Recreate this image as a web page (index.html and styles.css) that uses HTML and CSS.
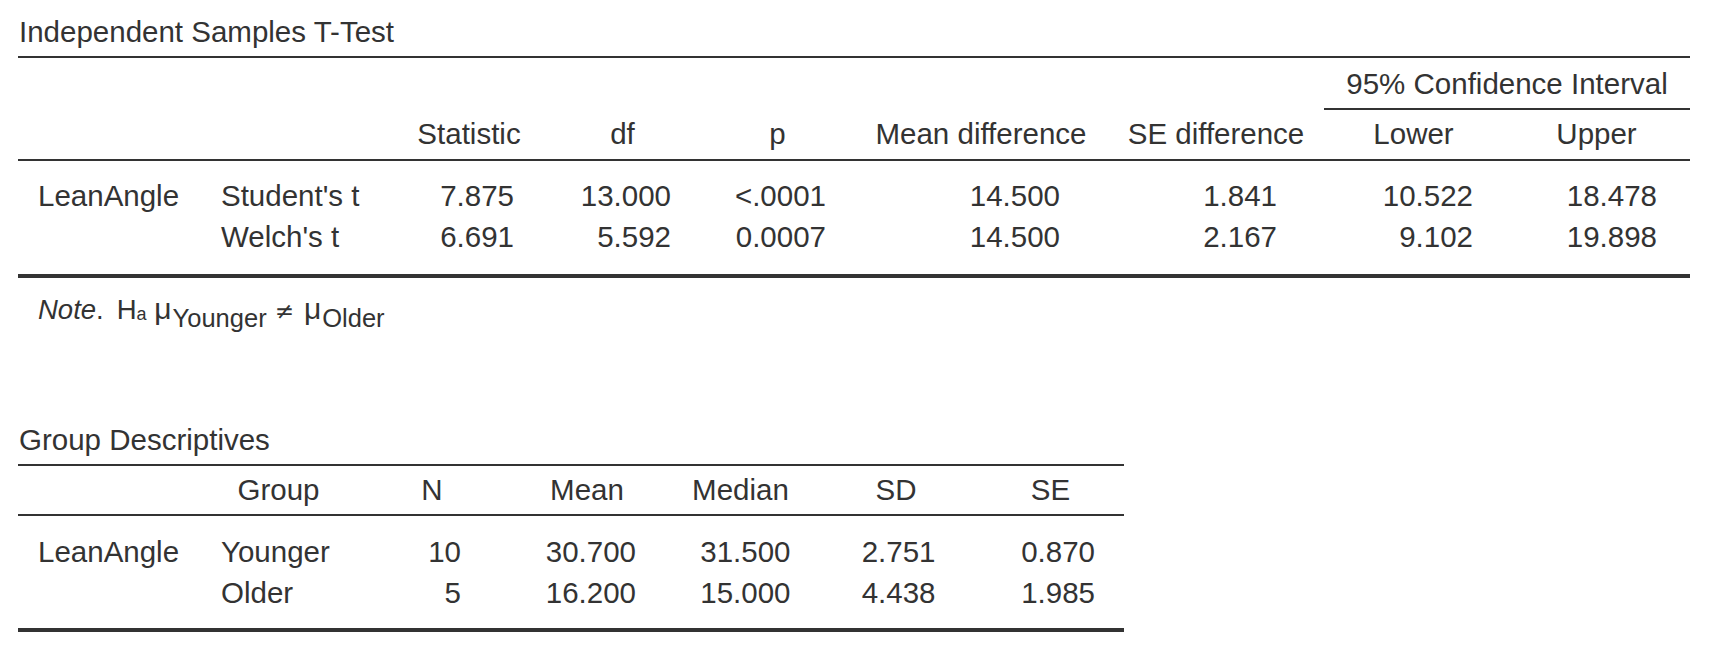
FILE: index.html
```html
<!DOCTYPE html>
<html lang="en">
<head>
<meta charset="utf-8">
<title>Independent Samples T-Test</title>
<link rel="stylesheet" href="styles.css">
</head>
<body>
<div class="report">
  <section class="analysis">
    <h2 class="title">Independent Samples T-Test</h2>
    <table class="stats ttest">
      <colgroup>
        <col class="c-var"><col class="c-test"><col class="c-stat"><col class="c-df"><col class="c-p">
        <col class="c-md"><col class="c-se"><col class="c-lo"><col class="c-up">
      </colgroup>
      <thead>
        <tr class="over">
          <th></th><th></th><th></th><th></th><th></th><th></th><th></th>
          <th class="span" colspan="2">95% Confidence Interval</th>
        </tr>
        <tr class="cols">
          <th></th><th></th>
          <th>Statistic</th><th>df</th><th>p</th><th>Mean difference</th><th>SE difference</th><th>Lower</th><th>Upper</th>
        </tr>
      </thead>
      <tbody>
        <tr>
          <td class="lbl">LeanAngle</td><td class="lbl">Student's t</td>
          <td>7.875</td><td>13.000</td><td>&lt;.0001</td><td>14.500</td><td>1.841</td><td>10.522</td><td>18.478</td>
        </tr>
        <tr>
          <td class="lbl"></td><td class="lbl">Welch's t</td>
          <td>6.691</td><td>5.592</td><td>0.0007</td><td>14.500</td><td>2.167</td><td>9.102</td><td>19.898</td>
        </tr>
      </tbody>
    </table>
    <p class="note"><i>Note</i>.<span class="hyp">H<span class="sub-a">a</span> <span class="mu">μ</span><sub class="sub">Younger</sub><span class="neq">≠</span><span class="mu">μ</span><sub class="sub">Older</sub></span></p>
  </section>

  <section class="analysis second">
    <h2 class="title">Group Descriptives</h2>
    <table class="stats desc">
      <colgroup>
        <col class="d-var"><col class="d-grp"><col class="d-n"><col class="d-mean">
        <col class="d-med"><col class="d-sd"><col class="d-se">
      </colgroup>
      <thead>
        <tr class="cols">
          <th></th><th>Group</th><th>N</th><th>Mean</th><th>Median</th><th>SD</th><th>SE</th>
        </tr>
      </thead>
      <tbody>
        <tr>
          <td class="lbl">LeanAngle</td><td class="lbl">Younger</td>
          <td>10</td><td>30.700</td><td>31.500</td><td>2.751</td><td>0.870</td>
        </tr>
        <tr>
          <td class="lbl"></td><td class="lbl">Older</td>
          <td>5</td><td>16.200</td><td>15.000</td><td>4.438</td><td>1.985</td>
        </tr>
      </tbody>
    </table>
  </section>
</div>
</body>
</html>
```

FILE: styles.css
```css
html, body {
  margin: 0;
  padding: 0;
  background: #ffffff;
}

body {
  font-family: "Liberation Sans", Arial, sans-serif;
  color: #333333;
}

.report {
  padding: 15px 0 0 18px;
}

.title {
  margin: 0 0 0 1px;
  padding-bottom: 7px;
  font-size: 29.5px;
  line-height: 34px;
  font-weight: normal;
}

.stats {
  border-collapse: separate;
  border-spacing: 0;
  table-layout: fixed;
  border-top: 2px solid #333333;
  border-bottom: 4px solid #333333;
  font-size: 29.5px;
  line-height: 34px;
}

.ttest { width: 1672px; }
.desc { width: 1106px; }

/* t-test column widths */
.c-var { width: 183px; }
.c-test { width: 193px; }
.c-stat { width: 150px; }
.c-df { width: 157px; }
.c-p { width: 153px; }
.c-md { width: 254px; }
.c-se { width: 216px; }
.c-lo { width: 179px; }
.c-up { width: 187px; }

/* descriptives column widths */
.d-var { width: 183px; }
.d-grp { width: 155px; }
.d-n { width: 152px; }
.d-mean { width: 158px; }
.d-med { width: 149px; }
.d-sd { width: 162px; }
.d-se { width: 147px; }

.stats th {
  font-weight: normal;
  text-align: center;
  padding: 0;
  white-space: nowrap;
}

.stats td {
  text-align: right;
  white-space: nowrap;
  padding: 3.5px 0;
}

.stats td.lbl {
  text-align: left;
  padding-left: 20px;
}

/* header rows */
.ttest .over th {
  padding: 9px 0 7px;
}
.ttest .over th.span {
  border-bottom: 2px solid #333333;
}
.cols th {
  padding: 7px 0 7px;
  border-bottom: 2px solid #333333;
}
.ttest .cols th {
  padding-bottom: 8px;
}

.ttest tbody tr:first-child td { padding-top: 18px; }
.ttest tbody tr:last-child td { padding-bottom: 20px; }
.desc tbody tr:first-child td { padding-top: 19px; }
.desc tbody tr:last-child td { padding-bottom: 18px; }

.ttest td:nth-child(3) { padding-right: 30px; }
.ttest td:nth-child(4) { padding-right: 30px; }
.ttest td:nth-child(5) { padding-right: 28px; }
.ttest td:nth-child(6) { padding-right: 48px; }
.ttest td:nth-child(7) { padding-right: 47px; }
.ttest td:nth-child(8) { padding-right: 30px; }
.ttest td:nth-child(9) { padding-right: 33px; }

.desc td:nth-child(3) { padding-right: 47px; }
.desc td:nth-child(4) { padding-right: 30px; }
.desc td:nth-child(5) { padding-right: 24.5px; }
.desc td:nth-child(6) { padding-right: 41.5px; }
.desc td:nth-child(7) { padding-right: 29px; }

.note {
  margin: 0;
  padding: 17px 0 0 20px;
  font-size: 27.5px;
  line-height: 30px;
}

.note i {
  font-style: italic;
}

.hyp {
  margin-left: 13px;
}

.sub-a {
  font-size: 18px;
  vertical-align: -1px;
  line-height: 0;
}

.mu {
  font-size: 30px;
  line-height: 0;
  margin-right: 1px;
}

.neq {
  font-family: "DejaVu Sans", "Liberation Sans", sans-serif;
  font-size: 23px;
  line-height: 0;
  margin: 0 10px 0 8px;
}

.sub {
  font-size: 25.5px;
  vertical-align: -8px;
  line-height: 0;
}

.second {
  margin-top: 98px;
}
```
